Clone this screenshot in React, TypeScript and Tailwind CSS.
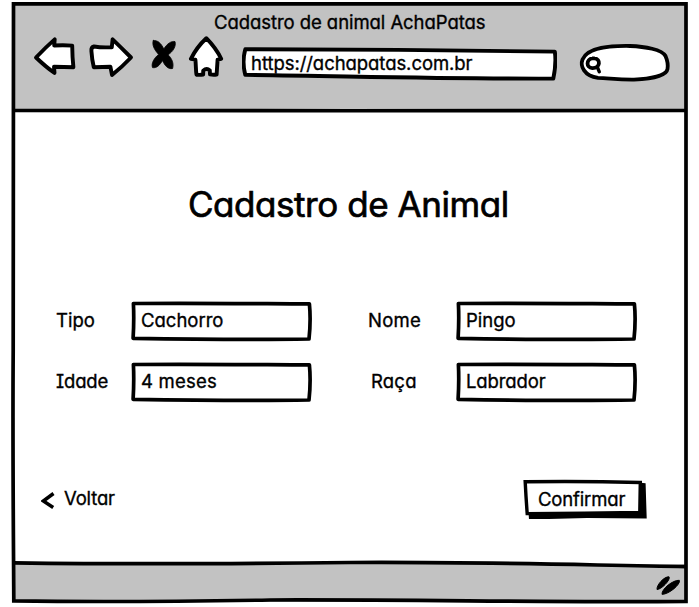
import type { ReactNode } from "react";

const fontFamily =
  "font-['Inter','Open_Sans',sans-serif] [font-feature-settings:'cv11','cv08'] [-webkit-text-stroke:0.35px_black]";

function Label({ children, className = "" }: { children: ReactNode; className?: string }) {
  return (
    <span className={`block whitespace-nowrap text-[18.5px] leading-7 ${className}`}>{children}</span>
  );
}

function Header() {
  return (
    <header className="h-[107px] bg-[#c2c2c2]">
      <div className="flex h-[33px] items-end pl-[200px]">
        <Label className="tracking-[-0.06px]">Cadastro de animal AchaPatas</Label>
      </div>
      <div className="flex h-[52px] items-start">
        <svg
          className="ml-[19px] h-11 w-[192px] shrink-0"
          viewBox="33 36 192 44"
          fill="white"
          stroke="black"
          strokeWidth="3.9"
          strokeLinejoin="round"
          strokeLinecap="round"
        >
          <path d="M36 57.5 Q46 47 54.7 39.4 L54.2 45.5 Q64 45 72.2 45.6 Q72.3 57 73.4 67.2 Q64 67.2 54 66.8 L54.5 73 Q46 67 36 57.5Z" />
          <path d="M131 57.5 Q121 47.5 112.6 39.4 L111.8 47.2 Q102 47.8 94 46.5 Q91 47.3 91.4 51 Q92 60 93.8 67.2 Q103 67 110.4 66.7 L112 75 Q122 67 131 57.5Z" />
          <path
            stroke="black"
            strokeWidth="0.8"
            fill="black"
            d="M153.3 40.6 C157.5 39.8 161.3 43.5 163.8 49 C167 43.7 171.5 40.7 175 41.6 C176.4 46 173 51.8 168 54.8 C172 58.5 174 63.5 172.6 68.5 C168 69.6 164.5 65.2 162.5 60.5 C160 65 156.5 68.5 152.5 67.6 C151 63.5 154 58.2 158.6 54.4 C154 49.5 151.8 44.5 153.3 40.6Z"
          />
          <path d="M206.3 38.2 C199 45 194.5 51.5 190.9 58.8 L195.4 59.7 C196 65 195.7 70 196.5 74.7 Q200 75.2 203.2 74.5 L203.2 70.7 Q206.7 67.5 209.8 70.5 L210 74.3 Q213 75 216.6 74.5 L217.6 59.7 L221.2 58.9 C217 50 211.5 43.5 206.3 38.2Z" />
        </svg>
        <div className="relative ml-[17px] mt-2.5 h-[35px] w-[315px] shrink-0">
          <svg
            className="absolute inset-0"
            width="315"
            height="35"
            viewBox="242 46 315 35"
            fill="white"
            stroke="black"
            strokeWidth="3.9"
            strokeLinejoin="round"
          >
            <path d="M245.3 49.2 C350 49.4 450 50 554.8 51.6 Q556.5 63 553.3 78.6 C450 79 350 76.2 245.3 74.9 Q241.8 62 245.3 49.2Z" />
          </svg>
          <div className="relative flex h-[34px] items-center pl-[9px]">
            <Label className="tracking-[-0.06px]">https://achapatas.com.br</Label>
          </div>
        </div>
        <svg
          className="ml-[21px] mt-1.5 h-10 w-[94px] shrink-0"
          viewBox="578 42 94 40"
          fill="white"
          stroke="black"
          strokeWidth="3.8"
          strokeLinecap="round"
        >
          <path d="M598 77.9 C584 76 580 66 582.5 59.5 C588 47 611 45.7 630 46 C645 46.5 662 49.5 665.5 56 Q668.5 63 667.5 69 C666.5 76 650 79 634 79.6 C617 79.8 608 78 598 77.9Z" />
          <path d="M592.3 58.4 C586 59.2 586 67.7 592.3 68.1 C600.5 68.4 601 59 594.5 58.4 Q593.5 58.2 592.3 58.4Z" />
          <path d="M597.3 67 L599.3 71.8" strokeWidth="3.4" />
        </svg>
      </div>
    </header>
  );
}

function Field({ label, value, labelClass, valueClass }: {
  label: string;
  value: string;
  labelClass: string;
  valueClass: string;
}) {
  return (
    <div className="flex h-[61px] items-center">
      <Label className={`shrink-0 ${labelClass}`}>{label}</Label>
      <div className="relative h-10 w-[182px] shrink-0">
        <svg
          className="absolute inset-0 overflow-visible"
          width="182"
          height="40"
          viewBox="0 0 182 40"
          fill="white"
          stroke="black"
          strokeWidth="3.7"
          strokeLinejoin="round"
        >
          <path d="M3.4 3.5 C60 2.9 120 3.6 179.4 3.9 Q181 20 179 39 C120 40 60 39.3 3.1 38.3 Q4.2 20 3.4 3.5Z" />
        </svg>
        <div className="relative flex h-10 items-center pl-[11px]">
          <Label className={valueClass}>{value}</Label>
        </div>
      </div>
    </div>
  );
}

function Frame() {
  return (
    <svg
      className="pointer-events-none absolute inset-0"
      width="699"
      height="607"
      viewBox="0 0 699 607"
      fill="none"
      stroke="black"
      strokeWidth="3.7"
    >
      <path d="M13.5 3.8 L686 3.8 Q685.5 300 686 601.3 C550 602.5 420 599.5 270 600 C180 601.5 90 602 13.8 600.9 C13.5 540 12.5 450 13.2 350 Q14 150 13.5 3.8Z" />
      <path d="M14 110.5 Q350 111 686 110.5" />
      <path d="M14 562.8 C140 564.5 240 563.8 350 562.5 C480 561.7 580 565 686 566.6" />
      <g fill="black" strokeWidth="1" strokeLinejoin="round">
        <path d="M657 589.5 C656.5 585 664 576.5 669 576.8 C671 579.5 661.5 589.5 657 589.5Z" />
        <path d="M662 594.3 C661.5 589 673 579.8 679.3 580.3 C681 584 669 594.5 662 594.3Z" />
      </g>
    </svg>
  );
}

export default function App() {
  return (
    <div className={`relative h-[607px] w-[699px] overflow-hidden bg-white text-black ${fontFamily}`}>
      <div className="flex h-[602px] w-[687px] flex-col pl-3.5 pt-[3px]">
        <Header />
        <main className="flex h-[454px] flex-col bg-white">
          <h1 className="mt-[69px] whitespace-nowrap pl-[174px] text-[35px] leading-[50px] tracking-[-0.45px] [-webkit-text-stroke:0.7px_black]">
            Cadastro de Animal
          </h1>
          <section className="mt-[60px] flex">
            <div className="w-[311px] pl-[42px]">
              <Field label="Tipo" value="Cachorro" labelClass="w-[74px]" valueClass="" />
              <Field label="Idade" value="4 meses" labelClass="w-[74px] tracking-[-0.15px]" valueClass="tracking-[0.2px]" />
            </div>
            <div className="pl-[43px]">
              <Field label="Nome" value="Pingo" labelClass="w-[87px] tracking-[0.25px]" valueClass="" />
              <Field label="Raça" value="Labrador" labelClass="w-[87px] pl-[3px] tracking-[0.2px]" valueClass="tracking-[-0.1px]" />
            </div>
          </section>
          <footer className="mt-[68px] flex items-start justify-between pl-[27px] pr-[40px]">
            <button className="mt-[5px] flex items-center">
              <svg className="mt-[3px] h-5 w-[15px]" viewBox="41 489 15 20" fill="none" stroke="black" strokeWidth="3.5">
                <path d="M53.5 492.5 L43.3 500 L53.2 506.5" />
              </svg>
              <Label className="ml-[8px] tracking-[-0.15px]">Voltar</Label>
            </button>
            <button className="relative h-10 w-[124px]">
              <svg className="absolute inset-0" width="124" height="40" viewBox="523 479 124 40">
                <path d="M528.5 512 L529 519.5 L587 518 L646.7 518.5 L645.6 483.3 L638 482.5Z" />
                <path
                  d="M525.2 481.8 Q582 481 640.3 482.5 L639.8 512.4 Q585 513.5 527.2 513.6 Q526 498 525.2 481.8Z"
                  fill="white"
                  stroke="black"
                  strokeWidth="3.4"
                />
              </svg>
              <span className="relative flex h-[36px] items-center pl-[15px]">
                <Label className="tracking-[-0.15px]">Confirmar</Label>
              </span>
            </button>
          </footer>
        </main>
        <div className="h-[38px] shrink-0 bg-[#c2c2c2]" />
      </div>
      <Frame />
    </div>
  );
}
